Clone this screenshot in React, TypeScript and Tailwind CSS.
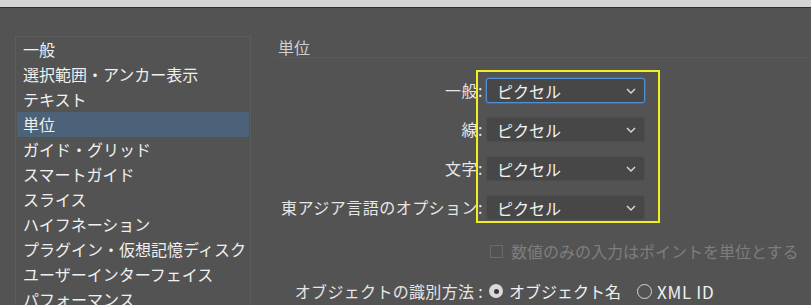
const categories = [
  '一般',
  '選択範囲・アンカー表示',
  'テキスト',
  '単位',
  'ガイド・グリッド',
  'スマートガイド',
  'スライス',
  'ハイフネーション',
  'プラグイン・仮想記憶ディスク',
  'ユーザーインターフェイス',
  'パフォーマンス',
  'ファイル管理・クリップボード'
];

const unitRows = [
  { label: '一般', focused: true },
  { label: '線', focused: false },
  { label: '文字', focused: false },
  { label: '東アジア言語のオプション', focused: false }
];

function Chevron() {
  return (
    <svg width="10" height="6" viewBox="0 0 10 6" className="shrink-0">
      <polyline points="1,1 5,5 9,1" fill="none" stroke="#dcdcdc" strokeWidth="1.4" />
    </svg>
  );
}

function UnitSelect({ focused }: { focused: boolean }) {
  return (
    <div
      className={
        focused
          ? 'flex h-[25px] w-[159px] items-center justify-between rounded-[3px] border border-[#4f8fd6] bg-[#474747] pl-[10px] pr-[8px] shadow-[0_0_0_1px_rgba(79,143,214,0.3)]'
          : 'flex h-[25px] w-[159px] items-center justify-between rounded-[3px] border border-[#4e4e4e] bg-[#474747] pl-[10px] pr-[8px]'
      }
    >
      <span className="text-[16px] leading-none text-[#f2f2f2]">ピクセル</span>
      <Chevron />
    </div>
  );
}

export default function App() {
  return (
    <div
      className="relative h-[305px] w-[811px] overflow-hidden bg-[#535353]"
      style={{ fontFamily: '"Noto Sans CJK JP", "Noto Sans", sans-serif' }}
    >
      <div className="h-[7px] bg-[#d5d5d5]" />
      <div className="h-px bg-[#2f2f2f]" />

      <div className="flex pl-[15px] pt-[28px]">
        <div className="h-[300px] w-[236px] shrink-0 border border-[#5d5d5d] px-px">
          {categories.map((name, i) => (
            <div
              key={name}
              className={
                i === 3
                  ? 'h-[25px] bg-[#4c6279] pl-[6px] text-[16px] leading-[25px] text-[#f0f0f0]'
                  : 'h-[25px] pl-[6px] text-[16px] leading-[25px] text-[#f0f0f0]'
              }
            >
              {name}
            </div>
          ))}
        </div>

        <div className="flex-1 pl-[24px]">
          <div className="h-[22px] border-b border-[#595959] pl-[3px] text-[16px] leading-[22px] text-[#d0d0d0]">
            単位
          </div>

          <div className="mt-[20px] flex flex-col gap-[14px]">
            {unitRows.map((row) => (
              <div key={row.label} className="flex items-center">
                <div className="w-[208px] text-right text-[16px] leading-[25px] tracking-[0.03em] text-[#e6e6e6]">
                  {row.label}:
                </div>
                <div className="ml-[3px]">
                  <UnitSelect focused={row.focused} />
                </div>
              </div>
            ))}
          </div>

          <div className="mt-[19px] flex h-[24px] items-center pl-[215px]">
            <span className="h-[13px] w-[13px] border border-[#6b6b6b]" />
            <span className="ml-[8px] text-[16px] leading-none text-[#7e7e7e]">
              数値のみの入力はポイントを単位とする
            </span>
          </div>

          <div className="mt-[16px] flex h-[24px] items-center">
            <div className="w-[208px] text-right text-[16px] leading-none tracking-[0.02em] text-[#e6e6e6]">
              オブジェクトの識別方法 :
            </div>
            <span className="ml-[6px] flex h-[14px] w-[14px] items-center justify-center rounded-full bg-[#dadada]">
              <span className="h-[5px] w-[5px] rounded-full bg-[#3a3a3a]" />
            </span>
            <span className="ml-[6px] text-[16px] leading-none text-[#f0f0f0]">オブジェクト名</span>
            <span className="ml-[16px] h-[15px] w-[15px] rounded-full border border-[#d6d6d6]" />
            <span className="ml-[5px] text-[17px] leading-none tracking-[0.04em] text-[#f0f0f0]">XML ID</span>
          </div>
        </div>
      </div>

      <div className="absolute left-[476px] top-[70px] h-[153px] w-[184px] border-2 border-[#f2ef1e]" />
    </div>
  );
}
